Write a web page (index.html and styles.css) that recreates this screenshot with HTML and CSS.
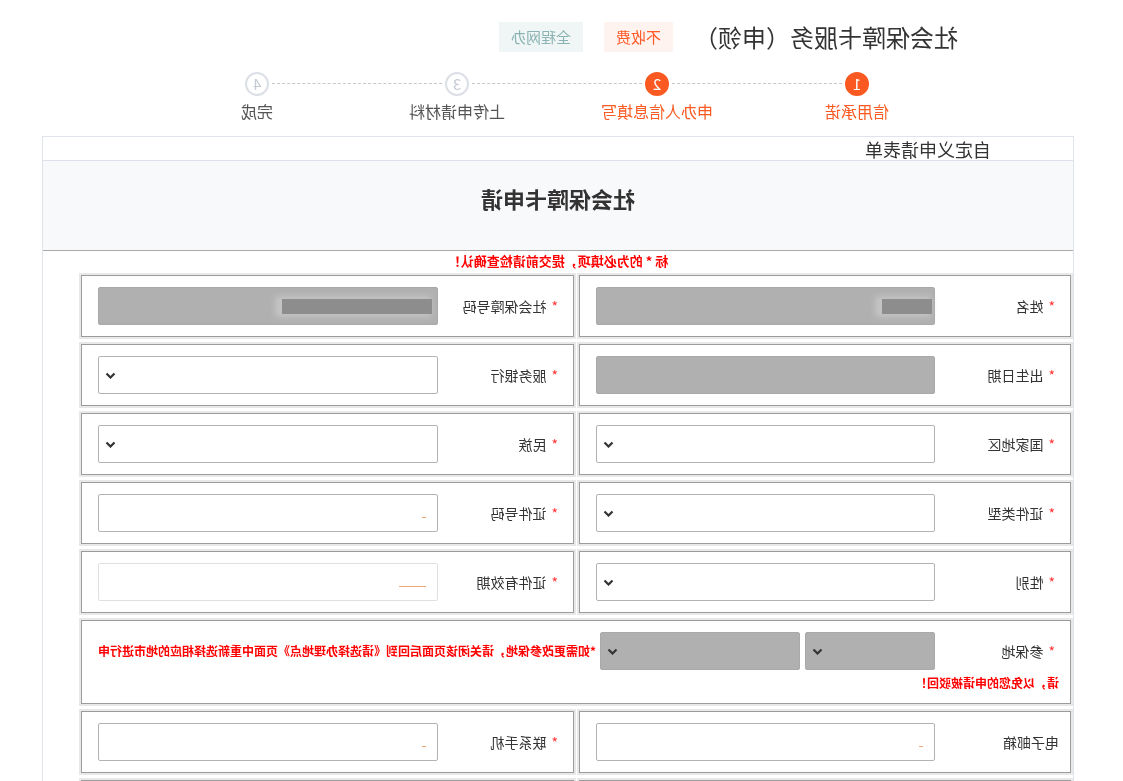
FILE: index.html
```html
<!DOCTYPE html>
<html lang="zh-CN">
<head>
  <meta charset="UTF-8">
  <meta name="viewport" content="width=device-width, initial-scale=1.0">
  <title>社会保障卡服务（申领）</title>
  <link rel="stylesheet" href="styles.css">
</head>
<body>
  <div class="page">
    <div class="top">
      <h1 class="title">社会保障卡服务（申领）</h1>
      <span class="tag tag-free">不收费</span>
      <span class="tag tag-online">全程网办</span>
    </div>

    <div class="steps">
      <div class="step done"><span class="dot">1</span><p>信用承诺</p></div>
      <div class="step done"><span class="dot">2</span><p>申办人信息填写</p></div>
      <div class="step"><span class="dot">3</span><p>上传申请材料</p></div>
      <div class="step last"><span class="dot">4</span><p>完成</p></div>
    </div>

    <div class="panel">
      <div class="panel-tab">自定义申请表单</div>
      <div class="panel-head">社会保障卡申请</div>
      <p class="note">标 * 的为必填项，提交前请检查确认！</p>

      <div class="form">
        <div class="cell">
          <label class="label"><span class="req">*</span>姓名</label>
          <div class="field disabled"><span class="blur blur-short"></span></div>
        </div>
        <div class="cell">
          <label class="label"><span class="req">*</span>社会保障号码</label>
          <div class="field disabled"><span class="blur blur-long"></span></div>
        </div>

        <div class="cell">
          <label class="label"><span class="req">*</span>出生日期</label>
          <div class="field disabled"></div>
        </div>
        <div class="cell">
          <label class="label"><span class="req">*</span>服务银行</label>
          <div class="field select"><svg width="11" height="7" viewBox="0 0 11 7"><path d="M1.5 1.5l4 4 4-4" fill="none" stroke="#333" stroke-width="2.2"/></svg></div>
        </div>

        <div class="cell">
          <label class="label"><span class="req">*</span>国家地区</label>
          <div class="field select"><svg width="11" height="7" viewBox="0 0 11 7"><path d="M1.5 1.5l4 4 4-4" fill="none" stroke="#333" stroke-width="2.2"/></svg></div>
        </div>
        <div class="cell">
          <label class="label"><span class="req">*</span>民族</label>
          <div class="field select"><svg width="11" height="7" viewBox="0 0 11 7"><path d="M1.5 1.5l4 4 4-4" fill="none" stroke="#333" stroke-width="2.2"/></svg></div>
        </div>

        <div class="cell">
          <label class="label"><span class="req">*</span>证件类型</label>
          <div class="field select"><svg width="11" height="7" viewBox="0 0 11 7"><path d="M1.5 1.5l4 4 4-4" fill="none" stroke="#333" stroke-width="2.2"/></svg></div>
        </div>
        <div class="cell">
          <label class="label"><span class="req">*</span>证件号码</label>
          <div class="field text"><span class="caret"></span></div>
        </div>

        <div class="cell">
          <label class="label"><span class="req">*</span>性别</label>
          <div class="field select"><svg width="11" height="7" viewBox="0 0 11 7"><path d="M1.5 1.5l4 4 4-4" fill="none" stroke="#333" stroke-width="2.2"/></svg></div>
        </div>
        <div class="cell">
          <label class="label"><span class="req">*</span>证件有效期</label>
          <div class="field text light"><span class="caret wide"></span></div>
        </div>

        <div class="cell cell-wide">
          <div class="label"><span class="req">*</span>参保地</div><span class="field select disabled small"><svg width="11" height="7" viewBox="0 0 11 7"><path d="M1.5 1.5l4 4 4-4" fill="none" stroke="#333" stroke-width="2.2"/></svg></span><span class="field select disabled medium"><svg width="11" height="7" viewBox="0 0 11 7"><path d="M1.5 1.5l4 4 4-4" fill="none" stroke="#333" stroke-width="2.2"/></svg></span><span class="warn">*如需更改参保地，请关闭该页面后回到《请选择办理地点》页面中重新选择相应的地市进行申请，以免您的申请被驳回！</span>
        </div>

        <div class="cell">
          <label class="label">电子邮箱</label>
          <div class="field text"><span class="caret"></span></div>
        </div>
        <div class="cell">
          <label class="label"><span class="req">*</span>联系手机</label>
          <div class="field text"><span class="caret"></span></div>
        </div>

        <div class="cell"></div>
        <div class="cell"></div>
      </div>
    </div>
  </div>
</body>
</html>
```

FILE: styles.css
```css
html, body {
  margin: 0;
  padding: 0;
  overflow: hidden;
  background: #fff;
}

body {
  font-family: "Noto Sans CJK SC", "Noto Sans", sans-serif;
  color: #333;
}

/* the whole page is shown mirrored */
.page {
  width: 1123px;
  height: 781px;
  transform: scaleX(-1);
}

.top {
  display: flex;
  align-items: center;
  height: 34px;
  padding: 20px 0 0 165px;
}

.title {
  margin: 0 21px 0 0;
  font-size: 24px;
  font-weight: normal;
  color: #333;
  line-height: 34px;
}

.tag {
  height: 30px;
  line-height: 30px;
  padding: 0 12px;
  font-size: 15px;
}

.tag-free {
  background: #fff3ef;
  color: #ff5a28;
  margin-right: 21px;
}

.tag-online {
  background: #f0f6f6;
  color: #8cb3b3;
}

.steps {
  display: flex;
  margin: 17px 0 0 166px;
}

.step {
  width: 200px;
  text-align: center;
  position: relative;
}

.step::after {
  content: "";
  position: absolute;
  top: 12px;
  left: calc(50% + 15px);
  width: 170px;
  border-top: 1px dashed #c8c8c8;
}

.step.last::after {
  display: none;
}

.dot {
  display: inline-block;
  width: 20px;
  height: 20px;
  line-height: 20px;
  border-radius: 50%;
  border: 2px solid #dcdfe6;
  color: #c6cad2;
  background: #fff;
  font-size: 15px;
}

.step.done .dot {
  background: #fa5a22;
  border-color: #fa5a22;
  color: #fff;
}

.step p {
  margin: 4px 0 0;
  font-size: 16px;
  line-height: 22px;
  color: #555;
}

.step.done p {
  color: #fa5a22;
}

.panel {
  margin: 14px 0 0 49px;
  width: 1030px;
  border: 1px solid #dfe3ea;
  border-bottom: none;
  height: 700px;
}

.panel-tab {
  height: 23px;
  padding-left: 82px;
  font-size: 18px;
  line-height: 25px;
  color: #333;
}

.panel-head {
  box-sizing: border-box;
  height: 91px;
  padding-top: 22px;
  text-align: center;
  background: #f8f9fb;
  border-top: 1px solid #dde2ea;
  border-bottom: 1px solid #a9a9a9;
  font-size: 22px;
  line-height: 30px;
  font-weight: bold;
  color: #333;
}

.note {
  margin: 0;
  padding-top: 2px;
  text-align: center;
  font-size: 13px;
  line-height: 16px;
  font-weight: bold;
  color: #f00;
}

.form {
  display: grid;
  grid-template-columns: 492px 493px;
  gap: 7px 5px;
  margin: 6px 0 0 2px;
}

.cell {
  display: flex;
  align-items: center;
  box-sizing: border-box;
  height: 62px;
  padding: 0 16px 0 11px;
  border: 1px solid #9c9c9c;
  box-shadow: 0 0 0 2px #e8e8e8;
}

.label {
  width: 124px;
  flex-shrink: 0;
  font-size: 14px;
  color: #333;
}

.req {
  color: #f33;
  margin: 0 5px 0 4px;
}

.field {
  box-sizing: border-box;
  width: 340px;
  height: 38px;
  border: 1px solid #b3b3b3;
  border-radius: 2px;
  background: #fff;
  display: flex;
  align-items: center;
}

.field.disabled {
  background: #b0b0b0;
  border-color: #a9a9a9;
}

.field.select {
  justify-content: flex-end;
  padding-right: 6px;
}

.field.light {
  border-color: #e0e0e0;
}

.blur {
  display: block;
  height: 15px;
  background: #8d8d8d;
  filter: blur(0.6px);
  box-shadow: 4px 0 6px 3px #c4c4c4;
}

.blur-short {
  width: 50px;
  margin-left: 2px;
}

.blur-long {
  width: 150px;
  margin-left: 5px;
}

.caret {
  display: block;
  width: 4px;
  height: 1px;
  margin: 22px 0 0 11px;
  background: #f0a878;
  align-self: flex-start;
}

.caret.wide {
  width: 27px;
}

.cell-wide {
  grid-column: 1 / 3;
  display: block;
  height: 84px;
  padding: 11px 10px 0 11px;
  line-height: 20px;
}

.cell-wide .label {
  display: inline-block;
  vertical-align: middle;
}

.cell-wide .field {
  display: inline-flex;
  vertical-align: middle;
  margin-right: 5px;
}

.field.small {
  width: 130px;
}

.field.medium {
  width: 200px;
  margin-right: 4px;
}

.warn {
  font-size: 12px;
  font-weight: bold;
  color: #f00;
  vertical-align: middle;
}
```
